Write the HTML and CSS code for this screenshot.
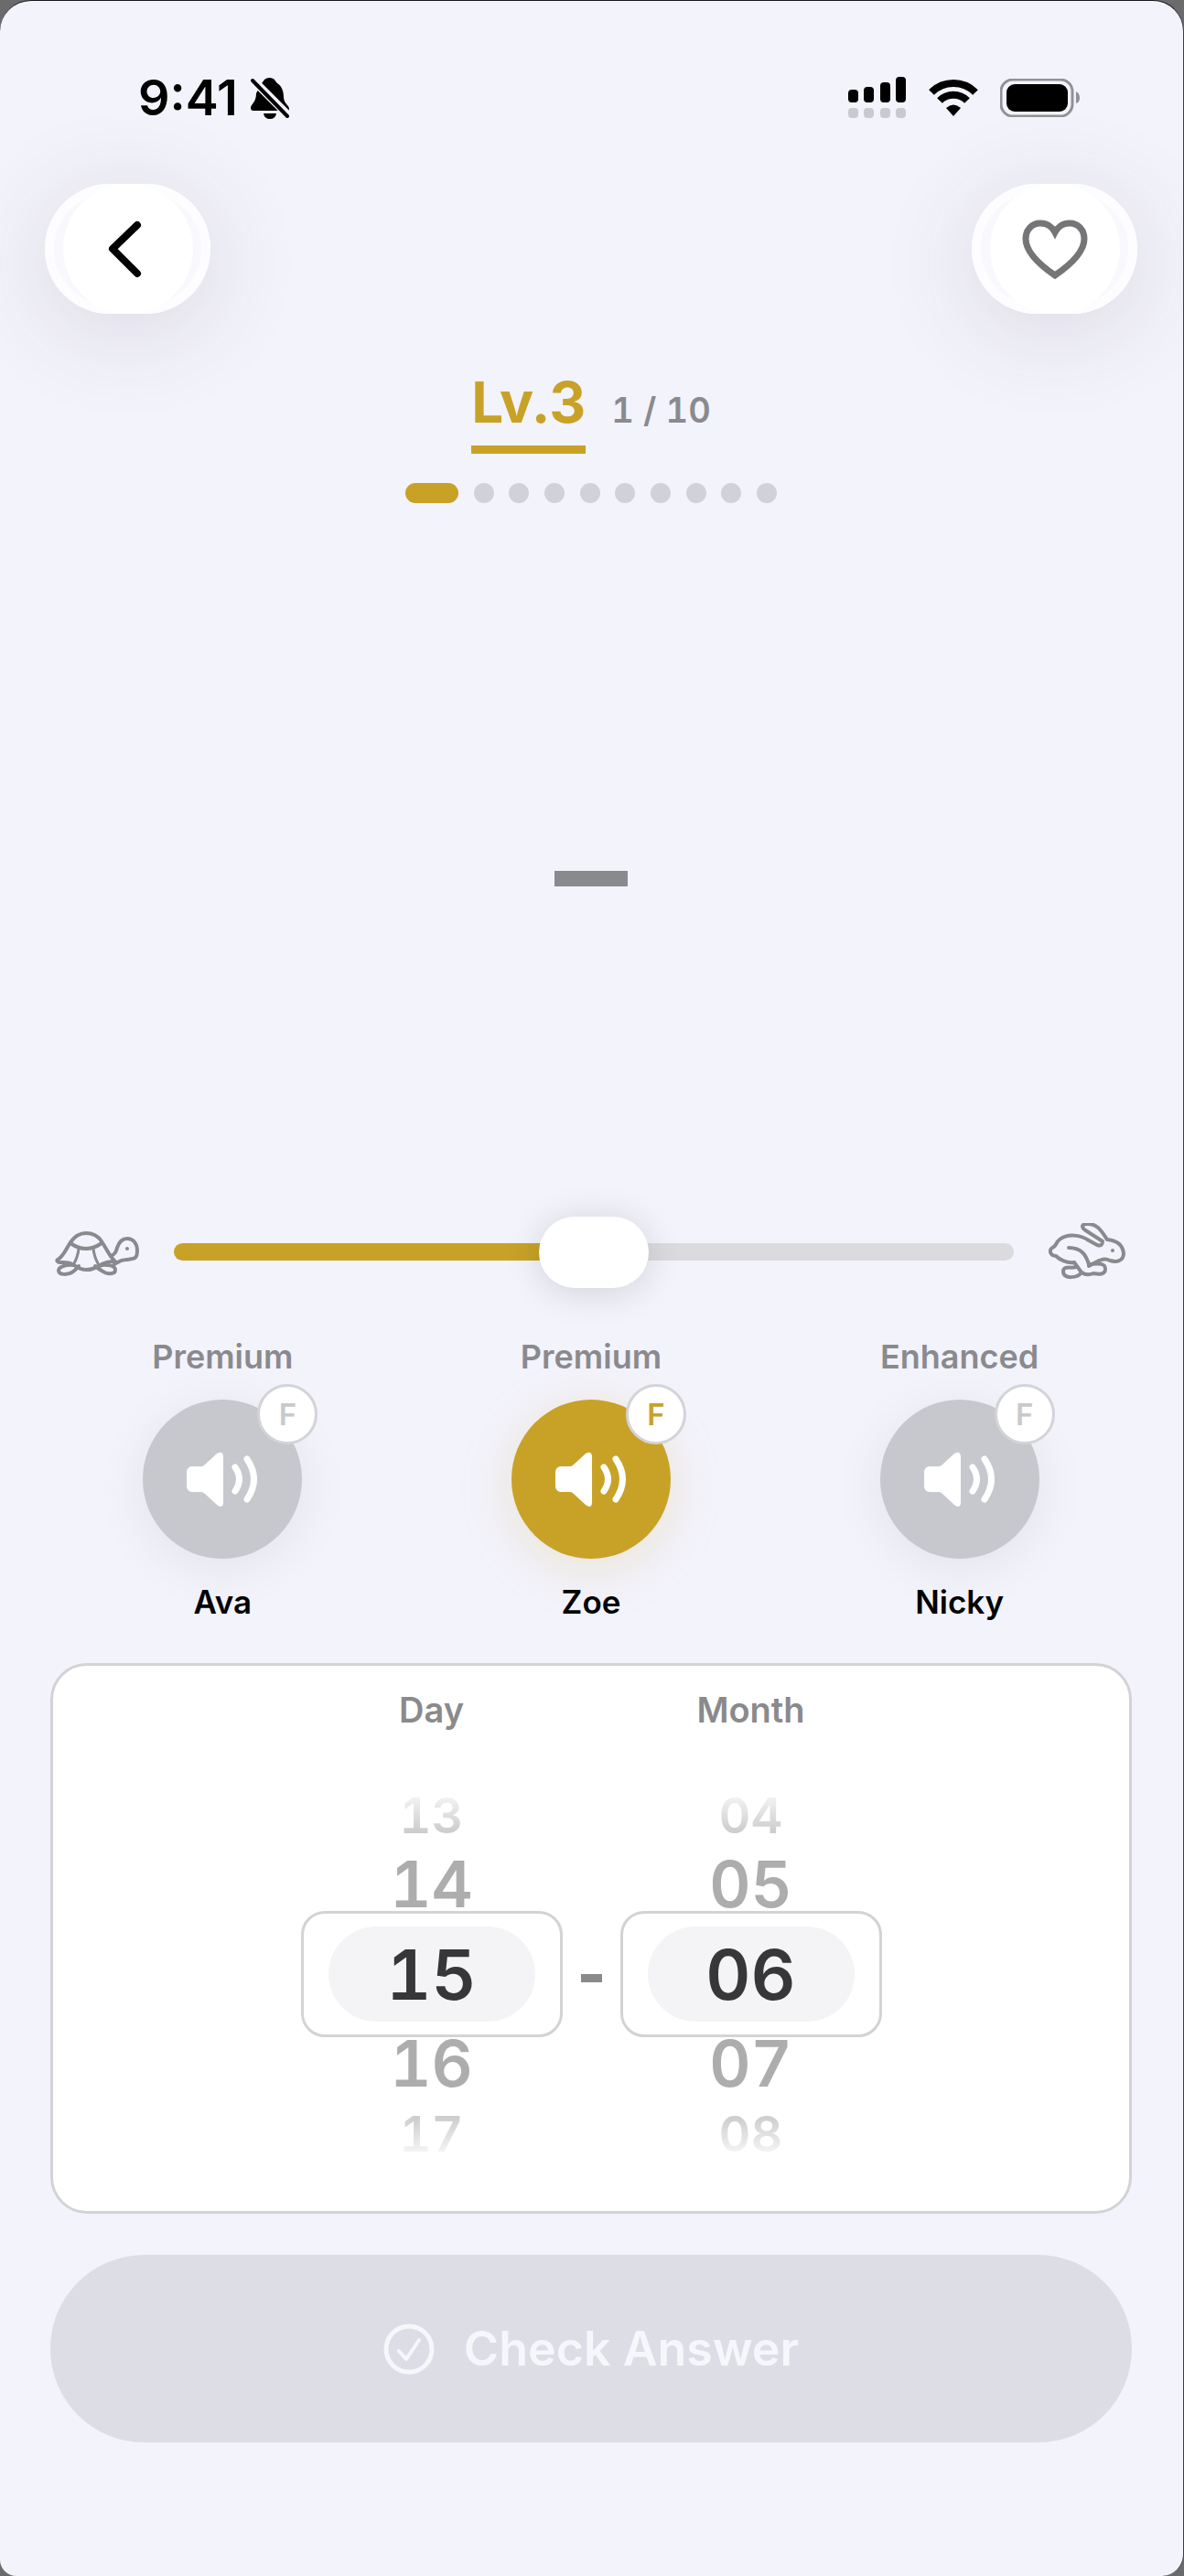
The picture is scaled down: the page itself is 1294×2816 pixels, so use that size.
FILE: index.html
```html
<!DOCTYPE html>
<html lang="en">
<head>
    <meta charset="utf-8">
    <meta name="viewport" content="width=device-width, initial-scale=1">
    <title>Date Practice</title>
    <link rel="stylesheet" href="styles.css">
</head>
<body>
    <!-- Speaker icon shared by the voice buttons -->
    <svg class="sprite" aria-hidden="true">
        <symbol id="speaker" viewBox="0 0 80 60">
            <path d="M1 22a6 6 0 0 1 6-6h10q2 0 4-2L34 2q7-4 7 4v49q0 8-7 3L21 46q-2-2-4-2H7a6 6 0 0 1-6-6z" fill="#fff"/>
            <path d="M54 17q9 13 0 26M67 8q15 22 0 44" fill="none" stroke="#fff" stroke-width="7" stroke-linecap="round"/>
        </symbol>
    </svg>

    <div class="screen">
        <header class="status-bar">
            <div class="status-left">
                <span class="time">9:41</span>
                <svg width="42" height="46" viewBox="0 0 42 46" aria-hidden="true">
                    <path d="M12 7C14 5 15 1 20.500 1S27 5 29 7c5 3 7 9 7 15 0 7 6 9 6 13 0 2-1 2-3 2H3c-2 0-3-1-3-3 0-4 6-6 6-16z"/>
                    <path d="M14 40h14q-1 6-7 6t-7-6z"/>
                    <path d="M0 1l42 42" stroke="#f3f3fc" stroke-width="9"/>
                    <path d="M2 4l38 39" stroke="#000" stroke-width="4" stroke-linecap="round"/>
                </svg>
            </div>
            <div class="status-right">
                <svg width="64" height="46" viewBox="0 0 64 46" aria-hidden="true">
                    <g fill="#000">
                        <rect x="0" y="14" width="11" height="14" rx="4"/>
                        <rect x="17" y="11" width="11" height="17" rx="4"/>
                        <rect x="35" y="6" width="11" height="22" rx="4"/>
                        <rect x="52" y="0" width="11" height="28" rx="4"/>
                    </g>
                    <g fill="#c9c9d0">
                        <rect x="0" y="34" width="11" height="11" rx="4"/>
                        <rect x="17" y="34" width="11" height="11" rx="4"/>
                        <rect x="35" y="34" width="11" height="11" rx="4"/>
                        <rect x="52" y="34" width="11" height="11" rx="4"/>
                    </g>
                </svg>
                <svg width="54" height="40" viewBox="0 0 54 40" aria-hidden="true">
                    <path d="M3 14a34 34 0 0 1 48 0M12 23a21 21 0 0 1 30 0" fill="none" stroke="#000" stroke-width="8"/>
                    <path d="M27 40l-8-9q8-7 16 0z"/>
                </svg>
                <svg width="88" height="42" viewBox="0 0 88 42" aria-hidden="true">
                    <rect x="1" y="1" width="78" height="40" rx="13" fill="none" stroke="#919197" stroke-width="3"/>
                    <rect x="7" y="6" width="67" height="30" rx="9"/>
                    <path d="M83 14q4 2 4 7t-4 6z" fill="#919197"/>
                </svg>
            </div>
        </header>

        <nav class="nav-bar">
            <button type="button" class="nav-button" aria-label="Back">
                <svg width="142" height="142" viewBox="0 0 142 142" aria-hidden="true">
                    <circle cx="71" cy="71" r="71" fill="#fff"/>
                    <path d="M81 45L54 71l27 27" fill="none" stroke="#000" stroke-width="8" stroke-linecap="round" stroke-linejoin="round"/>
                </svg>
            </button>
            <button type="button" class="nav-button" aria-label="Favorite">
                <svg width="142" height="142" viewBox="0 0 142 142" aria-hidden="true">
                    <circle cx="71" cy="71" r="71" fill="#fff"/>
                    <path d="M71 100C52 87 39 74 39 60c0-10 7-17 16-17 7 0 13 4 16 10 3-6 9-10 16-10 9 0 16 7 16 17 0 14-13 27-32 40z" fill="none" stroke="#757577" stroke-width="7"/>
                </svg>
            </button>
        </nav>

        <section class="progress">
            <div class="progress-title">
                <h1>Lv.3</h1>
                <span class="count">1 / 10</span>
            </div>
            <div class="dots">
                <span class="dot active"></span>
                <span class="dot"></span>
                <span class="dot"></span>
                <span class="dot"></span>
                <span class="dot"></span>
                <span class="dot"></span>
                <span class="dot"></span>
                <span class="dot"></span>
                <span class="dot"></span>
                <span class="dot"></span>
            </div>
        </section>

        <main>
            <div class="prompt"><span class="prompt-dash"></span></div>

            <div class="speed">
                <svg width="92" height="62" viewBox="0 0 92 62" fill="none" stroke="#8a8a8e" stroke-width="4" stroke-linejoin="round" stroke-linecap="round" aria-hidden="true">
                    <path d="M3 40C9 37 12 29 17 21c5-7 10-10 17-10s13 3 17 9c6 9 9 17 15 22-8 0-11 1-17 4-10 7-20 6-28 0-6-4-11-3-16-3q-4-1-2-3z"/>
                    <path d="M17 22q17 12 34 0"/>
                    <path d="M26 28q-1 9-5 16M42 28q1 9 5 16" stroke-width="3"/>
                    <path d="M61 36c5-2 6-5 7-9 2-6 5-10 11-10 7 0 11 6 11 13 0 10-4 9-12 10-7 0-9 3-13 5"/>
                    <path d="M20 46C12 45 4 48 4 52c0 5 11 5 16 1 4-3 5-5 6-6M48 47c9-3 18 0 18 4 0 6-10 5-15 1-3-2-6-4-7-5"/>
                    <circle cx="79" cy="28" r="2" fill="#8a8a8e" stroke="none"/>
                </svg>
                <input type="range" class="speed-slider" min="0" max="100" value="50" aria-label="Speech speed">
                <svg width="84" height="62" viewBox="0 0 84 62" fill="none" stroke="#8a8a8e" stroke-width="4" stroke-linejoin="round" stroke-linecap="round" aria-hidden="true">
                    <path d="M28 43C20 44 12 40 8 36 2 36 0 30 4 27c4-1 4-6 8-9C21 11 35 13 44 19l9 5q6 2 6-4L42 9c-8-5-5-8 0-8 12-1 17 10 22 17 10 1 17 6 18 15 0 9-8 10-15 8-6-3-8-1-12 0l-11 6"/>
                    <path d="M22 27c15 0 19 9 22 18 12-1 18-1 18 5 0 7-7 6-13 5-5 2-10 1-13-1l-8-11"/>
                    <path d="M30 48c-6 2-14-2-14 5 0 9 16 7 20 1"/>
                    <circle cx="70" cy="30" r="2" fill="#8a8a8e" stroke="none"/>
                </svg>
            </div>

            <div class="voices">
                <div class="voice">
                    <span class="quality">Premium</span>
                    <button type="button" class="voice-button" aria-label="Ava">
                        <svg width="80" height="60" aria-hidden="true"><use href="#speaker"/></svg>
                        <span class="badge">F</span>
                    </button>
                    <span class="name">Ava</span>
                </div>
                <div class="voice selected">
                    <span class="quality">Premium</span>
                    <button type="button" class="voice-button" aria-label="Zoe" aria-pressed="true">
                        <svg width="80" height="60" aria-hidden="true"><use href="#speaker"/></svg>
                        <span class="badge">F</span>
                    </button>
                    <span class="name">Zoe</span>
                </div>
                <div class="voice">
                    <span class="quality">Enhanced</span>
                    <button type="button" class="voice-button" aria-label="Nicky">
                        <svg width="80" height="60" aria-hidden="true"><use href="#speaker"/></svg>
                        <span class="badge">F</span>
                    </button>
                    <span class="name">Nicky</span>
                </div>
            </div>

            <form class="answer">
                <div class="date-card">
                    <div class="picker" role="radiogroup" aria-labelledby="day-label">
                        <span class="picker-label" id="day-label">Day</span>
                        <div class="wheel">
                            <label class="far above"><input type="radio" name="day" value="13">13</label>
                            <label class="near"><input type="radio" name="day" value="14">14</label>
                            <label class="current"><input type="radio" name="day" value="15" checked><span>15</span></label>
                            <label class="near"><input type="radio" name="day" value="16">16</label>
                            <label class="far below"><input type="radio" name="day" value="17">17</label>
                        </div>
                    </div>
                    <span class="separator"></span>
                    <div class="picker" role="radiogroup" aria-labelledby="month-label">
                        <span class="picker-label" id="month-label">Month</span>
                        <div class="wheel">
                            <label class="far above"><input type="radio" name="month" value="04">04</label>
                            <label class="near"><input type="radio" name="month" value="05">05</label>
                            <label class="current"><input type="radio" name="month" value="06" checked><span>06</span></label>
                            <label class="near"><input type="radio" name="month" value="07">07</label>
                            <label class="far below"><input type="radio" name="month" value="08">08</label>
                        </div>
                    </div>
                </div>

                <button type="submit" class="check-button" disabled>
                    <svg width="56" height="56" viewBox="0 0 56 56" fill="none" stroke="#f6f6fb" stroke-linecap="round" stroke-linejoin="round" aria-hidden="true">
                        <circle cx="28" cy="28" r="25" stroke-width="5"/>
                        <path d="M17 30l8 9 14-21" stroke-width="4"/>
                    </svg>
                    Check Answer
                </button>
            </form>
        </main>
    </div>
</body>
</html>
```
FILE: styles.css
```css
* {
    box-sizing: border-box;
}

body {
    margin: 0;
    background-color: #6b6b6e;
    font-family: Inter, "Liberation Sans", sans-serif;
    font-weight: 600;
    color: #000000;
}

button {
    border: none;
    padding: 0;
    font: inherit;
    cursor: pointer;
}

svg {
    display: block;
    flex: none;
}

.sprite {
    display: none;
}

.screen {
    display: flex;
    flex-direction: column;
    min-height: 100vh;
    padding: 76px 56px 146px 55px;
    border-top: 1px solid #16161c;
    border-right: 1px solid #3a3c48;
    border-radius: 34px 34px 24px 18px;
    background-color: #f3f3fc;
    overflow: hidden;
}

/* Status bar */
.status-bar {
    display: flex;
    justify-content: space-between;
    align-items: center;
    height: 60px;
    padding: 0 56px 0 96px;
}

.status-left {
    display: flex;
    align-items: center;
    gap: 14px;
}

.status-right {
    display: flex;
    align-items: center;
    gap: 24px;
}

.time {
    font-size: 54px;
    line-height: 60px;
}

/* Back and favorite buttons */
.nav-bar {
    display: flex;
    justify-content: space-between;
    margin: 64px -6px 0;
}

.nav-button {
    display: flex;
    justify-content: center;
    width: 181px;
    height: 142px;
    border-radius: 71px;
    background: linear-gradient(#ffffff 12px, #f8f8fd 12px, #f8f8fd 130px, #ffffff 130px);
    box-shadow: inset 0 0 0 10px #fdfdff, 0 16px 110px rgba(70, 60, 50, 0.14);
}

/* Level and progress */
.progress {
    display: flex;
    flex-direction: column;
    align-items: center;
    margin-top: 60px;
}

.progress-title {
    display: flex;
    align-items: baseline;
    gap: 28px;
}

h1 {
    margin: 0;
    padding-bottom: 10px;
    border-bottom: 9px solid #c8a227;
    color: #c8a227;
    font-size: 62px;
    font-weight: 700;
    line-height: 74px;
}

.count {
    color: #8a8a8e;
    font-size: 38px;
    font-variant-numeric: tabular-nums;
}

.dots {
    display: flex;
    justify-content: space-between;
    width: 406px;
    margin-top: 32px;
}

.dot {
    width: 22px;
    height: 22px;
    border-radius: 11px;
    background-color: #d1d1d8;
}

.dot.active {
    width: 58px;
    background-color: #c8a227;
}

main {
    display: flex;
    flex: 1;
    flex-direction: column;
}

.prompt {
    display: flex;
    flex: 1;
    justify-content: center;
    align-items: center;
    padding-top: 42px;
}

.prompt-dash {
    width: 80px;
    height: 17px;
    background-color: #8a8a8e;
}

/* Speed slider */
.speed {
    display: flex;
    align-items: center;
    gap: 38px;
    padding: 0 7px 0 5px;
}

.speed-slider {
    flex: 1;
    min-width: 0;
    height: 78px;
    margin: 0;
    background: none;
    -webkit-appearance: none;
    appearance: none;
}

.speed-slider::-webkit-slider-runnable-track {
    height: 19px;
    border-radius: 10px;
    background: linear-gradient(to right, #c8a227 50%, #dadadf 50%);
}

.speed-slider::-webkit-slider-thumb {
    width: 120px;
    height: 78px;
    margin-top: -29px;
    border-radius: 39px;
    background-color: #ffffff;
    box-shadow: 0 4px 40px rgba(0, 0, 0, 0.14);
    -webkit-appearance: none;
    appearance: none;
}

/* Voices */
.voices {
    display: grid;
    grid-template-columns: repeat(3, 1fr);
    gap: 26px;
    margin-top: 54px;
}

.voice {
    display: flex;
    flex-direction: column;
    align-items: center;
    font-size: 35px;
    line-height: 44px;
}

.quality {
    color: #8a8a8e;
    font-size: 36px;
}

.voice-button {
    position: relative;
    display: flex;
    justify-content: center;
    align-items: center;
    width: 174px;
    height: 174px;
    margin: 25px 0;
    border-radius: 50%;
    background-color: #c7c8ce;
    box-shadow: 0 10px 60px rgba(0, 0, 0, 0.07);
}

.selected .voice-button {
    background-color: #c8a227;
    box-shadow: 0 10px 60px rgba(200, 162, 39, 0.2);
}

.badge {
    position: absolute;
    top: -17px;
    right: -17px;
    width: 66px;
    height: 66px;
    border: 3px solid #d3d3d8;
    border-radius: 50%;
    background-color: #ffffff;
    color: #c9c9cd;
    font-size: 33px;
    line-height: 60px;
    text-align: center;
}

.selected .badge {
    color: #c8a227;
}

/* Date picker */
.date-card {
    display: flex;
    justify-content: center;
    align-items: flex-start;
    gap: 20px;
    margin-top: 45px;
    padding: 24px 20px 38px;
    border: 3px solid #d3d3d6;
    border-radius: 40px;
    background-color: #ffffff;
}

.picker {
    display: flex;
    flex-direction: column;
    align-items: center;
}

.picker-label {
    color: #8a8a8c;
    font-size: 38px;
    line-height: 48px;
}

.wheel {
    display: flex;
    flex-direction: column;
    align-items: center;
    margin-top: 44px;
    font-variant-numeric: tabular-nums;
}

.wheel label {
    display: flex;
    justify-content: center;
    align-items: center;
    cursor: pointer;
}

.wheel input {
    width: 0;
    height: 0;
    margin: 0;
    opacity: 0;
    appearance: none;
}

.wheel .far {
    height: 94px;
    color: transparent;
    font-size: 54px;
    background-clip: text;
    -webkit-background-clip: text;
}

.far.above {
    background-image: linear-gradient(#f4f4f4 26px, #cccccc 66px);
}

.far.below {
    background-image: linear-gradient(#cccccc 28px, #f4f4f4 68px);
}

.wheel .near {
    height: 58px;
    color: #adadad;
    font-size: 70px;
    line-height: 58px;
}

.wheel .current {
    width: 286px;
    height: 138px;
    border: 3px solid #d3d3d6;
    border-radius: 26px;
    color: #37373a;
    font-size: 76px;
}

.current span {
    width: 226px;
    border-radius: 52px;
    background-color: #f4f4f7;
    line-height: 104px;
    text-align: center;
}

.separator {
    width: 23px;
    height: 9px;
    margin-top: 313px;
    background-color: #8a8a8c;
}

/* Submit */
.check-button {
    display: flex;
    justify-content: center;
    align-items: center;
    gap: 32px;
    width: 100%;
    height: 205px;
    margin-top: 45px;
    border-radius: 103px;
    background-color: #dddde5;
    color: #f6f6fb;
    font-size: 52px;
}
```
